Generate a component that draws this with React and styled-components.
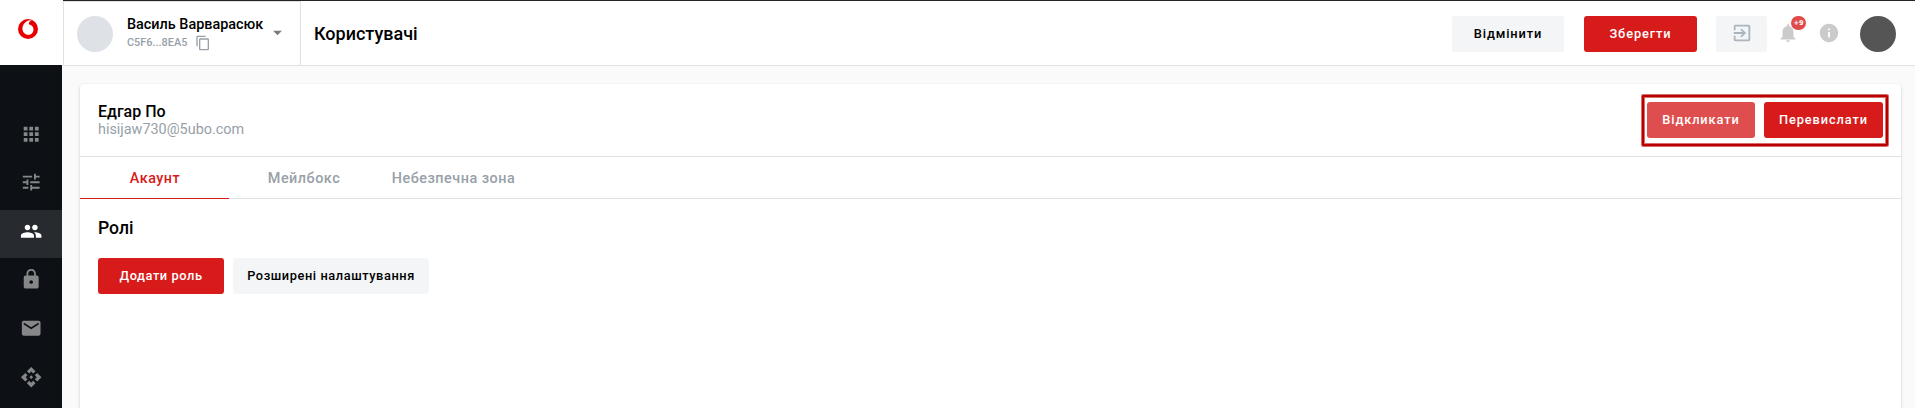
import React from 'react';
import styled, { createGlobalStyle, css } from 'styled-components';
import {
  MdApps, MdTune, MdPeople, MdLock, MdEmail, MdApi,
  MdContentCopy, MdArrowDropDown, MdExitToApp, MdNotifications, MdInfo,
} from 'react-icons/md';

const Global = createGlobalStyle`
  *, *::before, *::after { box-sizing: border-box; }
  body {
    margin: 0;
    background: #fafafa;
    color: #000;
    font-family: Roboto, "Liberation Sans", sans-serif;
    overflow: hidden;
  }
`;

const Shell = styled.div`
  display: flex;
  height: 100vh;
`;

const Sidebar = styled.aside`
  flex: none;
  width: 62px;
  display: flex;
  flex-direction: column;
  background: #0d1115;
`;

const Brand = styled.div`
  flex: none;
  height: 65px;
  width: 63px;
  padding: 19px 0 0 18px;
  background: #fff;
  line-height: 0;
`;

const Nav = styled.nav`
  padding-top: 48px;
`;

const NavItem = styled.a`
  display: flex;
  justify-content: center;
  height: 48px;
  margin-bottom: 0.55px;
  padding-top: 9.85px;
  font-size: 22.4px;
  color: ${(p) => (p.$active ? '#fff' : '#868788')};
  background: ${(p) => (p.$active ? '#272a2e' : 'transparent')};
`;

const Main = styled.div`
  flex: 1;
  min-width: 0;
  display: flex;
  flex-direction: column;
`;

const Header = styled.header`
  flex: none;
  display: flex;
  align-items: stretch;
  height: 66px;
  margin-left: 1px;
  border-top: 1px solid #232324;
  border-bottom: 1px solid #dee2e6;
  background: #fff;
`;

const Account = styled.div`
  display: flex;
  width: 238px;
  padding: 14px 0 0 13px;
  border: 1px solid #dee2e6;
  border-bottom: 0;
`;

const Avatar = styled.div`
  flex: none;
  width: 36px;
  height: 36px;
  border-radius: 50%;
  background: ${(p) => p.$color};
`;

const AccountText = styled.div`
  width: 141px;
  margin-left: 14px;
  white-space: nowrap;
`;

const AccountName = styled.div`
  font-size: 14.4px;
  font-weight: 500;
  line-height: 17px;
`;

const AccountId = styled.div`
  display: flex;
  align-items: center;
  gap: 8px;
  height: 18px;
  font-size: 10.9px;
  font-weight: 500;
  color: #98a0a8;
  svg { font-size: 16px; margin-top: 2px; }
`;

const Caret = styled.span`
  margin: 6px 0 0 -1px;
  font-size: 21px;
  line-height: 0;
  color: #77797b;
`;

const PageTitle = styled.h1`
  flex: 1;
  margin: 0;
  padding: 1px 0 0 13px;
  font-size: 18px;
  font-weight: 500;
  line-height: 63px;
`;

const HeaderActions = styled.div`
  display: flex;
  align-items: flex-start;
  padding: 15px 19px 0 0;
`;

const variants = {
  primary: css`background: #d71a1a; color: #fff;`,
  muted: css`background: #df4e4e; color: #fff;`,
  light: css`background: #f4f5f7; color: #000;`,
};

const Button = styled.button`
  display: flex;
  align-items: center;
  justify-content: center;
  width: ${(p) => p.$width}px;
  height: 36px;
  padding: 0 0 2px;
  border: 0;
  border-radius: 3px;
  font-family: inherit;
  font-size: 12.8px;
  font-weight: 500;
  letter-spacing: ${(p) => p.$spacing || 0.9}px;
  white-space: nowrap;
  ${(p) => variants[p.$variant]}
`;

const SaveButton = styled(Button)`
  margin: 0 19px 0 20px;
`;

const ExitButton = styled(Button)`
  font-size: 22px;
  color: #abb5be;
`;

const IconLink = styled.span`
  position: relative;
  display: flex;
  margin: 6px 0 0 ${(p) => p.$gap}px;
  font-size: 22px;
  color: #cbcbcb;
`;

const Badge = styled.span`
  position: absolute;
  top: -6px;
  left: 14px;
  width: 15px;
  height: 14px;
  border-radius: 7px;
  background: #df4a4a;
  color: #fff;
  font-family: "DejaVu Sans", sans-serif;
  font-size: 6.6px;
  font-weight: 700;
  line-height: 15px;
  text-align: center;
`;

const UserAvatar = styled(Avatar)`
  margin-left: 20px;
`;

const Card = styled.main`
  flex: 1;
  margin: 18px 14px 0 18px;
  border-radius: 4px 4px 0 0;
  background: #fff;
  box-shadow: 0 1px 3px rgba(0, 0, 0, 0.2);
`;

const CardHead = styled.div`
  display: flex;
  justify-content: space-between;
  height: 73px;
  padding: 10px 12px 0 18px;
  border-bottom: 1px solid #dee2e6;
`;

const PersonName = styled.div`
  margin-top: 8px;
  font-size: 16px;
  font-weight: 500;
  line-height: 19px;
`;

const PersonMail = styled.div`
  font-size: 14.4px;
  line-height: 18px;
  color: #98a0a8;
`;

const InviteActions = styled.div`
  display: flex;
  gap: 9px;
  height: 51px;
  margin: 1px;
  padding: 5px 3px;
  border: 2px solid #b90000;
  border-radius: 1px;
  box-shadow: 0 0 0 1px #d96b6b, inset 0 0 0 1px #d96b6b;
`;

const Tabs = styled.div`
  display: flex;
  height: 42px;
  border-bottom: 1px solid #dee2e6;
`;

const Tab = styled.div`
  width: ${(p) => p.$width}px;
  height: 42px;
  padding-left: 1px;
  border-bottom: 1px solid ${(p) => (p.$active ? '#d71a1a' : 'transparent')};
  color: ${(p) => (p.$active ? '#d71a1a' : '#98a0a8')};
  font-size: 14.4px;
  font-weight: 500;
  line-height: 44px;
  letter-spacing: 0.5px;
  text-align: center;
`;

const Section = styled.section`
  padding: 19px 18px;
`;

const SectionTitle = styled.h2`
  margin: 0 0 19px;
  font-size: 17.6px;
  font-weight: 500;
  line-height: 21px;
`;

const ButtonRow = styled.div`
  display: flex;
  gap: 9px;
`;

const BrandMark = () => (
  <svg width="20" height="20" viewBox="0 0 20 20">
    <circle cx="10" cy="10" r="10" fill="#e60000" />
    <path
      d="M10.1 15.8C7.2 15.8 4.4 13.3 4.4 9.5 4.4 7 5.7 4.6 7.5 3.2 9.1 1.8 11.4.9 13.4.9c.3 0 .6 0 .7.1-1.8.4-3.3 2-3.3 4v.2c3.1.8 4.7 2.6 4.7 5.2 0 2.8-2.1 5.4-5.4 5.4z"
      fill="#fff"
    />
  </svg>
);

const NAV = [MdApps, MdTune, MdPeople, MdLock, MdEmail, MdApi];

export default function App() {
  return (
    <>
      <Global />
      <Shell>
        <Sidebar>
          <Brand><BrandMark /></Brand>
          <Nav>
            {NAV.map((Icon, i) => (
              <NavItem key={i} $active={i === 2}><Icon /></NavItem>
            ))}
          </Nav>
        </Sidebar>
        <Main>
          <Header>
            <Account>
              <Avatar $color="#dee2e6" />
              <AccountText>
                <AccountName>Василь Варварасюк</AccountName>
                <AccountId>C5F6...8EA5 <MdContentCopy /></AccountId>
              </AccountText>
              <Caret><MdArrowDropDown /></Caret>
            </Account>
            <PageTitle>Користувачі</PageTitle>
            <HeaderActions>
              <Button $variant="light" $width={112}>Відмінити</Button>
              <SaveButton $variant="primary" $width={113}>Зберегти</SaveButton>
              <ExitButton $variant="light" $width={51}><MdExitToApp /></ExitButton>
              <IconLink $gap={10}><MdNotifications /><Badge>+9</Badge></IconLink>
              <IconLink $gap={19}><MdInfo /></IconLink>
              <UserAvatar $color="#555" />
            </HeaderActions>
          </Header>
          <Card>
            <CardHead>
              <div>
                <PersonName>Едгар По</PersonName>
                <PersonMail>hisijaw730@5ubo.com</PersonMail>
              </div>
              <InviteActions>
                <Button $variant="muted" $width={108}>Відкликати</Button>
                <Button $variant="primary" $width={119}>Перевислати</Button>
              </InviteActions>
            </CardHead>
            <Tabs>
              <Tab $active $width={149}>Акаунт</Tab>
              <Tab $width={149}>Мейлбокс</Tab>
              <Tab $width={150}>Небезпечна зона</Tab>
            </Tabs>
            <Section>
              <SectionTitle>Ролі</SectionTitle>
              <ButtonRow>
                <Button $variant="primary" $width={126} $spacing={0.58}>Додати роль</Button>
                <Button $variant="light" $width={196} $spacing={0.58}>Розширені налаштування</Button>
              </ButtonRow>
            </Section>
          </Card>
        </Main>
      </Shell>
    </>
  );
}
